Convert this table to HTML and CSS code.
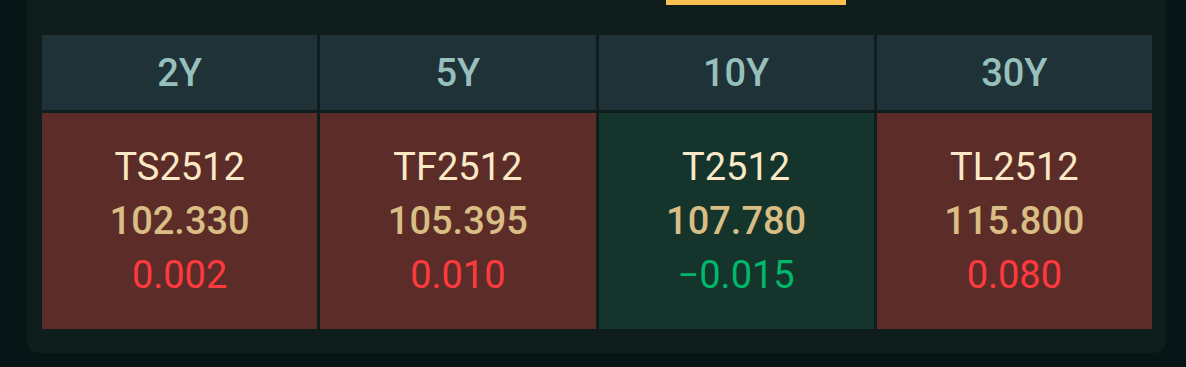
FILE: index.html
```html
<!DOCTYPE html>
<html>
<head>
<meta charset="utf-8">
<link rel="stylesheet" href="styles.css">
</head>
<body>
<div class="panel">
  <div class="tabbar"><span class="indicator"></span></div>
  <div class="grid">
    <div class="head">2Y</div>
    <div class="head">5Y</div>
    <div class="head">10Y</div>
    <div class="head">30Y</div>
    <div class="cell up">
      <div class="sym">TS2512</div>
      <div class="price">102.330</div>
      <div class="chg">0.002</div>
    </div>
    <div class="cell up">
      <div class="sym">TF2512</div>
      <div class="price">105.395</div>
      <div class="chg">0.010</div>
    </div>
    <div class="cell down">
      <div class="sym">T2512</div>
      <div class="price">107.780</div>
      <div class="chg">−0.015</div>
    </div>
    <div class="cell up">
      <div class="sym">TL2512</div>
      <div class="price">115.800</div>
      <div class="chg">0.080</div>
    </div>
  </div>
</div>
</body>
</html>
```
FILE: styles.css
```css
html, body {
  margin: 0;
  padding: 0;
  background: #081516;
  font-family: Roboto, "Noto Sans", sans-serif;
}
.panel {
  margin-left: 27px;
  width: 1139px;
  height: 353px;
  box-sizing: border-box;
  background: #0f1d1d;
  border-radius: 0 0 12px 12px;
  padding: 0 14px 0 15px;
}
.tabbar {
  height: 35px;
}
.indicator {
  display: block;
  margin-left: 624px;
  width: 180px;
  height: 5px;
  background: #f9c150;
}
.grid {
  display: grid;
  grid-template-columns: repeat(4, 1fr);
  grid-template-rows: 75px 216px;
  gap: 3px;
}
.head {
  background: #1f3237;
  color: #97c0bc;
  font-size: 38px;
  font-weight: 500;
  display: flex;
  align-items: center;
  justify-content: center;
}
.cell {
  display: flex;
  flex-direction: column;
  align-items: center;
  justify-content: center;
  font-size: 38px;
  line-height: 54px;
}
.cell.up { background: #5c2d28; }
.cell.down { background: #15342b; }
.sym { color: #fbe8c6; }
.price { color: #d8bd85; font-weight: 500; }
.up .chg { color: #ff3a3f; }
.down .chg { color: #00b86b; }
```
